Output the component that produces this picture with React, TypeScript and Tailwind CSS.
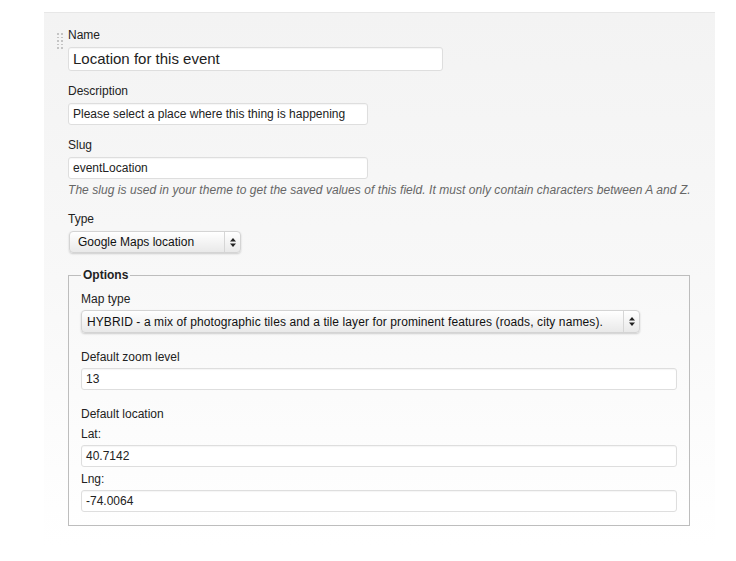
import React from "react";

const font = { fontFamily: '"Liberation Sans", Arial, Helvetica, sans-serif' };

function Label({ children, className = "" }: { children: React.ReactNode; className?: string }) {
  return <div className={`text-[12px] leading-4 text-[#222] ${className}`}>{children}</div>;
}

function TextBox({
  value,
  className = "",
}: {
  value: string;
  className?: string;
}) {
  return (
    <div
      className={`flex items-center bg-white border border-[#dedede] rounded-[3px] pl-[4px] text-[#222] shadow-[inset_0_1px_1px_rgba(0,0,0,0.04)] ${className}`}
    >
      {value}
    </div>
  );
}

function Arrows() {
  return (
    <svg width="6" height="9" viewBox="0 0 6 9">
      <path d="M3 0 L6 3.5 L0 3.5 Z" fill="#222" />
      <path d="M3 9 L6 5.5 L0 5.5 Z" fill="#222" />
    </svg>
  );
}

function SelectBox({
  value,
  className = "",
  textClass = "pl-[8px]",
}: {
  value: string;
  className?: string;
  textClass?: string;
}) {
  return (
    <div
      className={`flex items-stretch rounded-[4px] border border-[#d4d4d4] bg-gradient-to-b from-white to-[#e9e9e9] shadow-[0_1px_2px_rgba(0,0,0,0.18)] text-[12px] text-[#111] ${className}`}
    >
      <div className={`flex-1 flex items-center ${textClass}`}>{value}</div>
      <div className="w-[16px] flex items-center justify-center border-l border-[#d6d6d6]">
        <Arrows />
      </div>
    </div>
  );
}

function DragHandle() {
  return (
    <div className="grid grid-cols-2 gap-x-[2px] gap-y-[2px] mt-[20px] w-[6px] h-fit">
      {Array.from({ length: 10 }).map((_, i) => (
        <span key={i} className="block w-[2px] h-[1.5px] bg-[#c4c4c4]" />
      ))}
    </div>
  );
}

export default function App() {
  return (
    <div className="w-[736px] h-[561px] bg-white overflow-hidden" style={font}>
      <div className="mt-3 ml-[44px] w-[671px] border-t border-[#e7e7e7] bg-gradient-to-b from-[#f3f3f3] via-[#f8f8f8] to-white pb-[20px] flex gap-[5px] pl-[13px]">
        <DragHandle />
        <div className="w-[622px] pt-[14px]">
          <Label>Name</Label>
          <TextBox value="Location for this event" className="mt-1 w-[375px] h-[24px] text-[15px]" />

          <Label className="mt-3">Description</Label>
          <TextBox
            value="Please select a place where this thing is happening"
            className="mt-1 w-[300px] h-[22px] text-[12px]"
          />

          <Label className="mt-3">Slug</Label>
          <TextBox value="eventLocation" className="mt-1 w-[300px] h-[22px] text-[12px]" />
          <p className="mt-[3px] text-[12px] leading-4 italic text-[#666] tracking-[0.05px] whitespace-nowrap">
            The slug is used in your theme to get the saved values of this field. It must only contain characters between A and Z.
          </p>

          <Label className="mt-[13px]">Type</Label>
          <SelectBox value="Google Maps location" className="mt-1 ml-px w-[172px] h-[22px]" />

          <fieldset className="mt-[14px] border border-[#bdbdbd] px-3 pt-2 pb-[13px]">
            <legend className="px-[2px] text-[12px] leading-4 font-bold text-[#222]">Options</legend>
            <Label>Map type</Label>
            <SelectBox
              value="HYBRID - a mix of photographic tiles and a tile layer for prominent features (roads, city names)."
              className="mt-[3px] w-[559px] h-[23px]"
              textClass="pl-[5px] tracking-[0.1px]"
            />

            <Label className="mt-4">Default zoom level</Label>
            <TextBox value="13" className="mt-[3px] w-full h-[22px] text-[12px]" />

            <Label className="mt-4">Default location</Label>
            <Label className="mt-1">Lat:</Label>
            <TextBox value="40.7142" className="mt-[3px] w-full h-[22px] text-[12px]" />
            <Label className="mt-1">Lng:</Label>
            <TextBox value="-74.0064" className="mt-[3px] w-full h-[22px] text-[12px]" />
          </fieldset>
        </div>
      </div>
    </div>
  );
}
